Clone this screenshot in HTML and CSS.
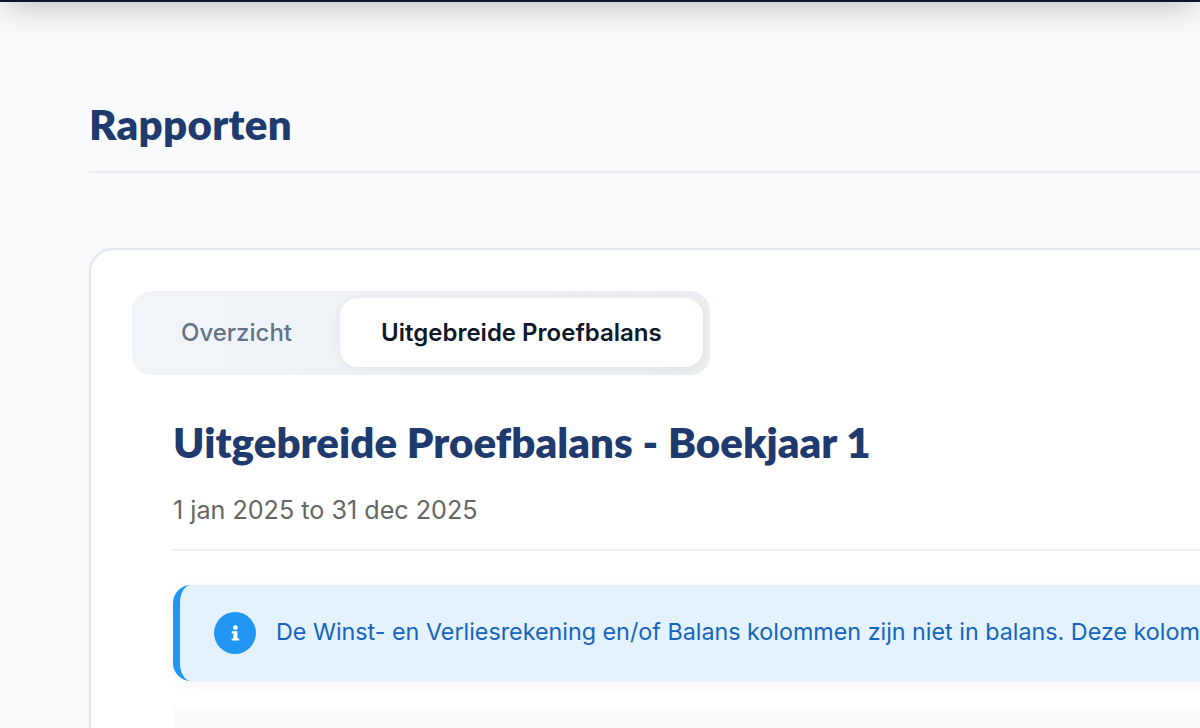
FILE: index.html
```html
<!DOCTYPE html>
<html lang="nl">
<head>
<meta charset="utf-8">
<title>Rapporten</title>
<link rel="stylesheet" href="styles.css">
</head>
<body>
<header class="topbar"></header>
<main class="page">
  <h1 class="page-title">Rapporten</h1>
  <section class="card">
    <div class="tabs">
      <button class="tab">Overzicht</button>
      <button class="tab tab-active">Uitgebreide Proefbalans</button>
    </div>
    <div class="report">
      <h2 class="report-title">Uitgebreide Proefbalans - Boekjaar 1</h2>
      <p class="report-period">1 jan 2025 to 31 dec 2025</p>
      <div class="alert">
        <span class="alert-icon">
          <svg width="9" height="16" viewBox="0 0 9 16"><circle cx="4.4" cy="2.6" r="2.4" fill="#fff"/><path d="M.8 6.2H6.4V13.4H8.2V15.6H.6V13.4H2.4V8.4H.8Z" fill="#fff"/></svg>
        </span>
        <span class="alert-text">De Winst- en Verliesrekening en/of Balans kolommen zijn niet in balans. Deze kolommen moeten in balans zijn voordat u verdergaat met het rapport.</span>
      </div>
      <div class="table-head"></div>
    </div>
  </section>
</main>
</body>
</html>
```
FILE: styles.css
```css
* { box-sizing: border-box; }
html, body { margin: 0; height: 100%; overflow: hidden; }
body { width: 1200px; height: 728px; background: #f8fafc; font-family: Inter, "Liberation Sans", sans-serif; }
.topbar { height: 62px; margin-top: -60px; background: #0f172a; box-shadow: 0 6px 36px -6px rgba(0,0,0,.3); }
.page { padding: 0 0 0 89px; width: 1400px; }
.page-title { margin: 0; height: 171px; padding-top: 97px; border-bottom: 2px solid #e8ebef; font: 800 42px/50px Lato, sans-serif; letter-spacing: .3px; color: #1e3a6e; width: 1311px; }
.card { margin-top: 75px; background: #fff; border: 2px solid #e2e8f0; border-radius: 24px; padding: 41px 40px 40px 41px; height: 700px; box-shadow: 0 2px 8px rgba(0,0,0,.02); }
.tabs { display: inline-flex; padding: 7px 7px 8px; background: linear-gradient(90deg, #f1f5f9, #ebeff4); border-radius: 20px; }
.tab { border: 0; background: none; height: 69px; padding: 1px 48px 0 42px; font: 500 24px/1 Inter, sans-serif; color: #64748b; }
.tab-active { background: #fff; font-weight: 600; color: #0f172a; border-radius: 18px; padding: 1px 41px 0; box-shadow: 0 2px 12px rgba(0,0,0,.05); }
.report { padding: 0 0 0 41px; }
.report-title { margin: 39px 0 0; font: 800 42px/56px Lato, sans-serif; letter-spacing: .05px; color: #1e3a6e; }
.report-period { margin: 26px 0 0; padding-bottom: 24px; border-bottom: 2px solid #eef0f3; font: 400 25.15px/29px Inter, sans-serif; color: #666; }
.alert { display: flex; align-items: center; gap: 20px; height: 96px; margin-top: 34px; padding-left: 34px; background: #e3f2fd; border-left: 7px solid #2196f3; border-radius: 18px; box-shadow: 0 4px 20px rgba(0,0,0,.05); white-space: nowrap; }
.alert-icon { flex: none; display: flex; align-items: center; justify-content: center; width: 42px; height: 42px; border-radius: 50%; background: #2196f3; }
.alert-text { padding-bottom: 3px; font: 400 23.3px/1 Inter, sans-serif; color: #1565c0; }
.table-head { height: 60px; margin-top: 28px; background: #f8fafc; }
```
